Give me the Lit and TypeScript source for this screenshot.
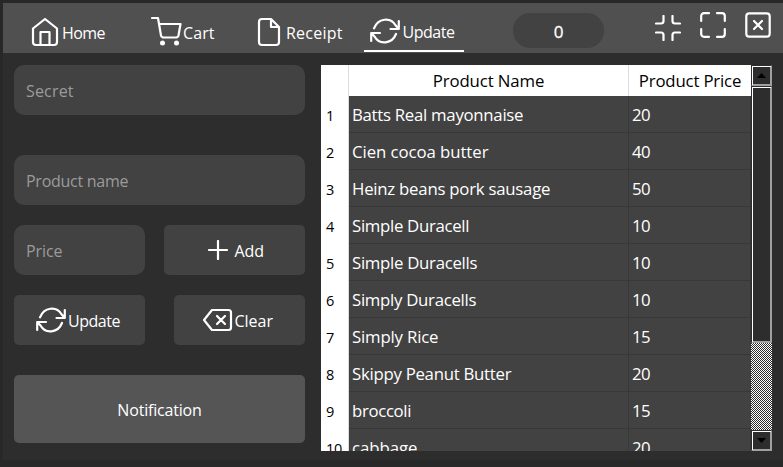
import { LitElement, html, css, svg } from "lit";
import { customElement, property } from "lit/decorators.js";

/** Text label whose tracking is adjusted so the word fills a given width. */
@customElement("fit-label")
class FitLabel extends LitElement {
  @property() text = "";
  @property({ type: Number }) width = 0;
  static styles = css`
    :host { display: block; white-space: pre; }
    span { display: inline-block; }
  `;
  firstUpdated() {
    const s = this.renderRoot.querySelector("span") as HTMLElement;
    const natural = s.getBoundingClientRect().width;
    const n = this.text.length;
    if (this.width && n > 1) s.style.letterSpacing = `${(this.width + 0.5 - natural) / (n - 1)}px`;
  }
  render() {
    return html`<span>${this.text}</span>`;
  }
}

const icons: Record<string, unknown> = {
  home: svg`<svg class="icon" width="28" height="30" viewBox="0 0 28 30"><path d="M2 11.500 14 2l12 9.500V25a3 3 0 0 1-3 3H5a3 3 0 0 1-3-3zM9.500 28V15h9v13"/></svg>`,
  cart: svg`<svg class="icon" width="32" height="30" viewBox="0 0 32 30"><path d="M1 2h6l3 17.500q.5 2 3 2h11.500q2.500 0 3-2L29.500 8H8.300"/><circle class="dot" cx="11.500" cy="27" r="2.500"/><circle class="dot" cx="25.500" cy="27" r="2.500"/></svg>`,
  receipt: svg`<svg class="icon" width="24" height="30" viewBox="0 0 24 30"><path d="M14 2H5a3 3 0 0 0-3 3v20a3 3 0 0 0 3 3h14a3 3 0 0 0 3-3V10zV10h8"/></svg>`,
  update: svg`<svg class="icon" width="30" height="28" viewBox="0 0 30 28"><path d="M28.800 4v8h-8.300M1.200 24v-8h8.800M4 11.300C8 1 20.500-.2 25.500 8.200l3 3.400M1.500 16.200l3.200 3.500C9.500 28.200 22 27 26 17"/></svg>`,
  add: svg`<svg class="icon" width="20" height="20" viewBox="0 0 20 20"><path d="M10 1v18M1 10h18"/></svg>`,
  clear: svg`<svg class="icon" width="31" height="24" viewBox="0 0 31 24"><path d="M10 2h16.500a2.500 2.500 0 0 1 2.500 2.500v15a2.500 2.500 0 0 1-2.500 2.500H10l-8-10zM15 8l8 8M23 8l-8 8"/></svg>`,
  shrink: svg`<svg class="icon" width="26" height="26" viewBox="0 0 26 26"><path d="M8.500 1v5a2.500 2.500 0 0 1-2.500 2.500H1M17.500 1v5a2.500 2.500 0 0 0 2.500 2.500h5M8.500 25v-5A2.500 2.500 0 0 0 6 17.500H1M17.500 25v-5a2.500 2.500 0 0 1 2.500-2.500h5"/></svg>`,
  expand: svg`<svg class="icon" width="26" height="26" viewBox="0 0 26 26"><path d="M9 1.200H4A2.800 2.800 0 0 0 1.200 4v5M17 1.200h5A2.800 2.800 0 0 1 24.800 4v5M9 24.800H4A2.800 2.800 0 0 1 1.200 22v-5M17 24.800h5a2.800 2.800 0 0 0 2.800-2.800v-5"/></svg>`,
  close: svg`<svg class="icon" width="26" height="26" viewBox="0 0 26 26"><rect x="1.300" y="1.300" width="23.400" height="23.400" rx="3"/><path d="M9 9l8 8M17 9l-8 8"/></svg>`,
};

const nav: [string, string, number][] = [
  ["home", "Home", 43], ["cart", "Cart", 31], ["receipt", "Receipt", 56], ["update", "Update", 52],
];

const products: [string, number, number][] = [
  ["Batts Real mayonnaise", 20, 171],
  ["Cien cocoa butter", 40, 136],
  ["Heinz beans pork sausage", 50, 198],
  ["Simple Duracell", 10, 117],
  ["Simple Duracells", 10, 125],
  ["Simply Duracells", 10, 124],
  ["Simply Rice", 15, 86],
  ["Skippy Peanut Butter", 20, 159],
  ["broccoli", 15, 59],
  ["cabbage", 20, 65],
];

@customElement("app-root")
class AppRoot extends LitElement {
  static styles = css`
    :host { display: block; width: 783px; height: 467px; box-sizing: border-box; overflow: hidden;
      padding: 3px 0 7px 3px; background: #282828; color: #fff;
      font: 16px/22px "Open Sans", "Noto Sans", sans-serif; }
    .window { height: 457px; background: #2d2d2d; }
    .icon { display: block; flex: none; fill: none; stroke: #fff; stroke-width: 2.2; stroke-linecap: round; stroke-linejoin: round; }
    .dot { fill: #fff; stroke: none; }
    header { height: 50px; background: #505050; display: flex; align-items: flex-start; box-sizing: border-box; }
    .tab { display: flex; align-items: flex-start; height: 49px; box-sizing: border-box; padding-top: 14px; }
    .tab .icon { margin-top: 0; }
    .tab fit-label { margin-top: 5px; }
    .home { margin-left: 28px; width: 120px; gap: 3px; }
    .cart { width: 103px; gap: 0; }
    .cart .icon { margin-top: -1px; }
    .receipt { width: 107px; margin-left: 3px; gap: 5px; }
    .update { width: 100px; padding-left: 6px; gap: 2.500px; border-bottom: 2px solid #fff; }
    .update fit-label { margin-top: 4px; }
    .count { margin: 10px 0 0 49px; width: 91px; height: 35px; border-radius: 17px; background: #424242;
      text-align: center; font-size: 17px; line-height: 37px; -webkit-text-stroke: .3px #fff; }
    .controls { display: flex; margin: 9px 0 0 51px; gap: 19px; }
    .controls .icon { margin-top: 0; }
    .controls .icon:first-child { margin-top: 3px; }
    main { display: flex; padding: 12px 11px 0 11px; gap: 16px; }
    form { width: 291px; display: flex; flex-direction: column; margin: 0; }
    .row { display: flex; justify-content: space-between; margin-bottom: 20px; }
    .field { height: 50px; box-sizing: border-box; padding: 15px 12px; border-radius: 10px; background: #424242; color: #9b9b9b; }
    .secret { margin-bottom: 40px; }
    .name { margin-bottom: 20px; }
    .price { width: 131px; }
    .button { height: 50px; width: 131px; box-sizing: border-box; border-radius: 5px; background: #424242; display: flex; align-items: center; }
    .button fit-label { margin-top: 2px; }
    .button.add { width: 141px; gap: 6.500px; padding-left: 44px; }
    .button.refresh { gap: 2px; padding-left: 22px; }
    .button.erase { padding-left: 28px; gap: 1.500px; }
    .notice { margin-top: 10px; height: 68px; border-radius: 5px; background: #555; display: flex; align-items: center; justify-content: center; }
    .notice fit-label { padding-top: 2px; }
    .table { width: 451px; height: 386px; display: flex; overflow: hidden; font-size: 16.800px; }
    .grid { width: 430px; }
    .head, .line { display: grid; grid-template-columns: 28px 280px 122px; }
    .head { height: 31px; background: #fff; color: #000; line-height: 31px; }
    .head div { display: flex; justify-content: center; box-sizing: border-box; border-right: 1px solid #dcdcdc; }
    .head div:last-child { border: 0; }
    .line { height: 37px; background: #424242; }
    .num { background: #fff; color: #000; border-right: 1px solid #dcdcdc; padding-left: 5px; font-size: 14.500px; line-height: 39px; letter-spacing: -.4px; }
    .cell { border-right: 1px solid #383838; border-bottom: 1px solid #383838; padding-left: 3px; line-height: 38px; height: 36px; }
    .bar { width: 21px; display: flex; flex-direction: column;
      background: repeating-conic-gradient(#fff 0 25%, #2d2d2d 0 50%) 0 0 / 2px 2px; }
    .piece { box-sizing: border-box; border: 1px solid; border-color: #2d2d2d #a0a0a0 #a0a0a0 #2d2d2d; background: #2d2d2d; box-shadow: inset 1px 1px #fff, inset -1px -1px #a0a0a0; }
    .end { height: 21px; display: flex; align-items: center; justify-content: center; }
    .thumb { height: 257px; margin-bottom: auto; }
    .arrow { fill: #000; display: block; }
  `;

  render() {
    return html`<div class="window">
      <header>
        ${nav.map(([id, text, w]) => html`<div class="tab ${id}">${icons[id]}<fit-label .text=${text} .width=${w}></fit-label></div>`)}
        <div class="count">0</div>
        <div class="controls">${icons.shrink}${icons.expand}${icons.close}</div>
      </header>
      <main>
        <form>
          <div class="field secret"><fit-label .text=${"Secret"} .width=${47}></fit-label></div>
          <div class="field name"><fit-label .text=${"Product name"} .width=${102}></fit-label></div>
          <div class="row">
            <div class="field price"><fit-label .text=${"Price"} .width=${36}></fit-label></div>
            <div class="button add">${icons.add}<fit-label .text=${"Add"} .width=${29}></fit-label></div>
          </div>
          <div class="row">
            <div class="button refresh">${icons.update}<fit-label .text=${"Update"} .width=${52}></fit-label></div>
            <div class="button erase">${icons.clear}<fit-label .text=${"Clear"} .width=${38}></fit-label></div>
          </div>
          <div class="notice"><fit-label .text=${"Notification"} .width=${84}></fit-label></div>
        </form>
        <div class="table">
          <div class="grid">
            <div class="head"><div></div>
              <div><fit-label .text=${"Product Name"} .width=${111}></fit-label></div>
              <div><fit-label .text=${"Product Price"} .width=${102}></fit-label></div>
            </div>
            ${products.map(([name, price, w], i) => html`<div class="line">
              <div class="num">${i + 1}</div>
              <div class="cell"><fit-label .text=${name} .width=${w}></fit-label></div>
              <div class="cell"><fit-label .text=${String(price)} .width=${18}></fit-label></div>
            </div>`)}
          </div>
          <div class="bar">
            <div class="piece end"><svg class="arrow" width="9" height="5" viewBox="0 0 9 5"><path d="M4.500 0 9 5H0z"/></svg></div>
            <div class="piece thumb"></div>
            <div class="piece end"><svg class="arrow" width="9" height="5" viewBox="0 0 9 5"><path d="M0 0h9L4.500 5z"/></svg></div>
          </div>
        </div>
      </main>
    </div>`;
  }
}
